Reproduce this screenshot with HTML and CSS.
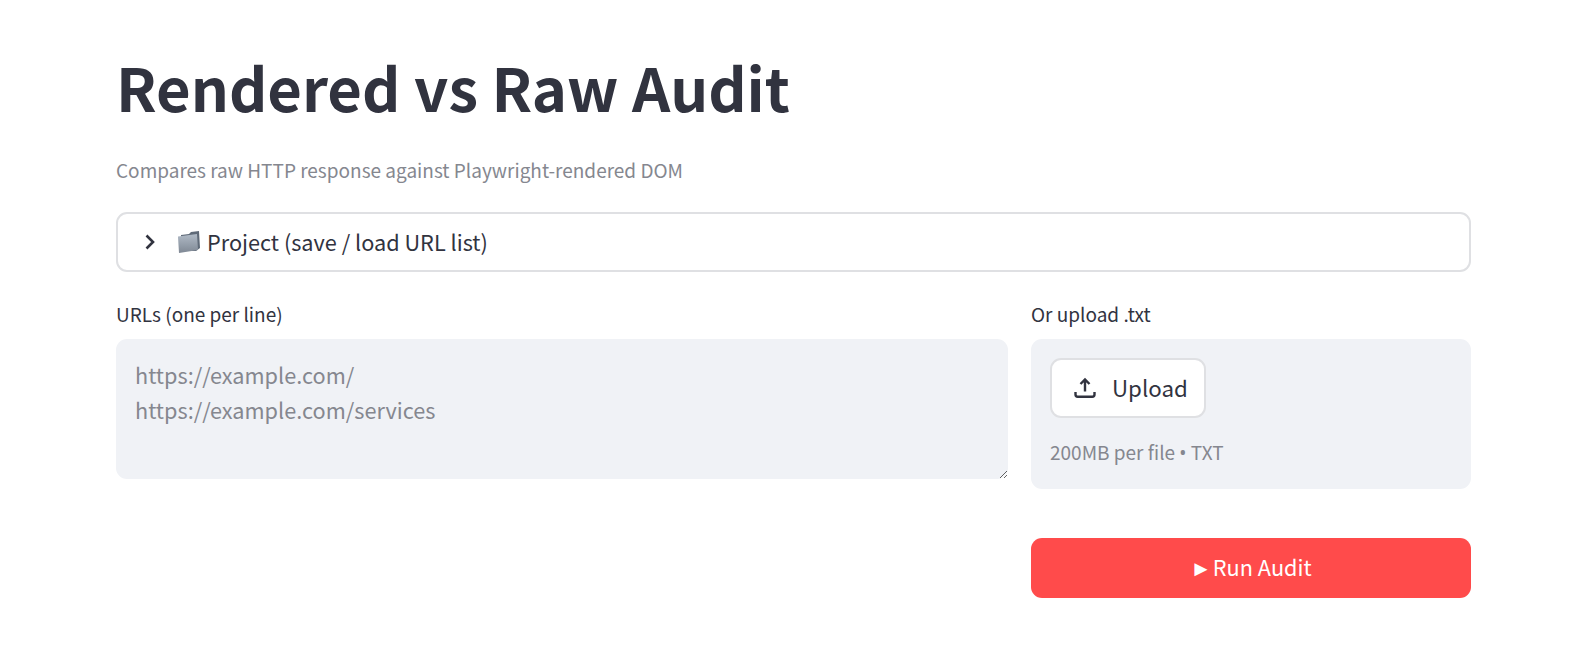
FILE: index.html
```html
<!DOCTYPE html>
<html lang="en">

    <head>

        <meta charset="UTF-8">
        <title>Rendered vs Raw Audit</title>

        <link rel="stylesheet" href="styles.css">

    </head>

    <body>

        <div class="main-container">

            <h1>Rendered vs Raw Audit</h1>
            <p class="caption">Compares raw HTTP response against Playwright-rendered DOM</p>

            <div class="expander">
                <svg class="chevron" width="16" height="16" viewBox="0 0 16 16">
                    <path d="M4.500 1.500 11 8l-6.500 6.500" fill="none" stroke="#31333f" stroke-width="2.600"/>
                </svg>
                <svg class="folder" width="22" height="22" viewBox="0 0 22 22">
                    <defs>
                        <linearGradient id="folderFront" x1="0" y1="0" x2="0" y2="1">
                            <stop offset="0" stop-color="#b0bac6"/>
                            <stop offset="1" stop-color="#7f8894"/>
                        </linearGradient>
                    </defs>
                    <path d="M3 4 11 3 13 1 21 0 22 17 18 20 3 20z" fill="#5f6a78"/>
                    <path d="M0 5.500 19 3 20 19 1 22z" fill="url(#folderFront)"/>
                </svg>
                <span class="expander-title">Project (save / load URL list)</span>
            </div>

            <div class="input-row">

                <div class="field">
                    <label class="field-label" for="urls">URLs (one per line)</label>
                    <textarea id="urls" class="url-input" placeholder="https://example.com/&#10;https://example.com/services"></textarea>
                </div>

                <div class="field">
                    <label class="field-label">Or upload .txt</label>
                    <div class="dropzone">
                        <button class="upload-btn" type="button">
                            <svg width="24" height="24" viewBox="0 0 24 24">
                                <path d="M12 15.500V3.500M7.500 8 12 3.500 16.500 8M2.500 16v2.500c0 1.300.9 2.200 2.200 2.200h14.600c1.300 0 2.200-.9 2.200-2.200V16" fill="none" stroke="#31333f" stroke-width="2.400"/>
                            </svg>
                            <span class="upload-text">Upload</span>
                        </button>
                        <p class="dropzone-note">200MB per file <span class="bullet">•</span> TXT</p>
                    </div>
                </div>

            </div>

            <div class="action-row">
                <button class="run-btn" type="button"><span class="run-icon">►</span>Run Audit</button>
            </div>

        </div>

    </body>

</html>
```

FILE: styles.css
```css
body {
    background-color: #fff;
    color: #31333f;
    font-family: "Noto Sans CJK SC", "Noto Sans", sans-serif;
    margin: 0;
    padding: 0;
}

.main-container {
    padding: 46px 117px 0 116px;
}

h1 {
    font-size: 59.7px;
    font-weight: 700;
    line-height: 80px;
    margin: 0;
}

.caption {
    color: #85878f;
    font-size: 19px;
    line-height: 26px;
    margin: 31px 0 29px;
}

.expander {
    display: flex;
    align-items: center;
    box-sizing: border-box;
    height: 60px;
    padding-left: 24px;
    border: 2px solid #dfe0e3;
    border-radius: 11px;
}

.folder {
    margin-left: 20px;
}

.expander-title {
    font-size: 21.7px;
    line-height: 30px;
    margin-left: 7px;
}

.input-row {
    display: grid;
    grid-template-columns: 1fr 440px;
    gap: 23px;
    margin-top: 29px;
}

.field-label {
    display: block;
    font-size: 19px;
    line-height: 26px;
    margin-bottom: 12px;
}

.url-input {
    display: block;
    box-sizing: border-box;
    width: 100%;
    height: 140px;
    padding: 19px;
    border: 0;
    border-radius: 11px;
    background-color: #f0f2f6;
    color: #31333f;
    font-family: inherit;
    font-size: 21.7px;
    line-height: 34.7px;
    outline: none;
}

.url-input::placeholder {
    color: #85878f;
    opacity: 1;
}

.dropzone {
    box-sizing: border-box;
    height: 150px;
    padding: 19px;
    border-radius: 11px;
    background-color: #f0f2f6;
}

.upload-btn {
    display: flex;
    align-items: center;
    gap: 15px;
    box-sizing: border-box;
    width: 156px;
    height: 60px;
    padding: 0 0 0 21px;
    border: 2px solid #dfe0e3;
    border-radius: 11px;
    background-color: #fff;
    color: #31333f;
    font-family: inherit;
    font-size: 22.3px;
}

.upload-text {
    margin-bottom: 2px;
}

.dropzone-note {
    color: #85878f;
    font-size: 19px;
    line-height: 26px;
    margin: 21px 0 0;
}

.bullet {
    font-family: "Noto Sans", sans-serif;
}

.action-row {
    display: flex;
    justify-content: flex-end;
    margin-top: 49px;
}

.run-btn {
    display: flex;
    align-items: center;
    justify-content: center;
    gap: 1px;
    width: 440px;
    height: 60px;
    padding: 0 0 3px;
    border: 0;
    border-radius: 11px;
    background-color: #ff4b4b;
    color: #fff;
    font-family: inherit;
    font-size: 21.7px;
}
```
